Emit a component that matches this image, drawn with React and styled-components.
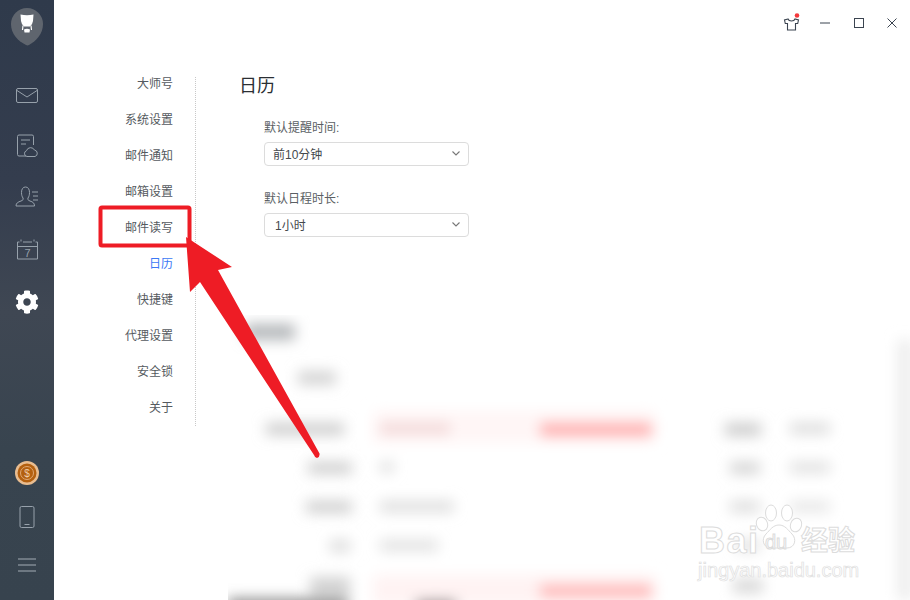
import React from "react";
import styled, { createGlobalStyle } from "styled-components";
import { FaCog } from "react-icons/fa";

const Global = createGlobalStyle`
  html, body { margin: 0; padding: 0; background: #fff; }
  body { font-family: "Liberation Sans", "Noto Sans CJK SC", sans-serif; }
`;

const Page = styled.div`
  position: relative;
  display: flex;
  width: 910px;
  height: 600px;
  overflow: hidden;
  background: #fff;
`;

const Rail = styled.aside`
  flex: 0 0 54px;
  display: flex;
  flex-direction: column;
  align-items: center;
  background: linear-gradient(180deg, #2f3a4b 0%, #343d4e 30%, #3f4753 52%, #38444f 75%, #37434e 100%);
`;

const Logo = styled.div`
  height: 70px;
  padding-top: 8px;
  box-sizing: border-box;
`;

const RailItem = styled.div`
  height: ${(p) => p.$h}px;
  display: flex;
  align-items: center;
  justify-content: center;
  color: ${(p) => p.$color || "#97a1ab"};
`;

const RailBottom = styled.div`
  margin-top: auto;
  padding-bottom: 9px;
`;

const Main = styled.main`
  flex: 1;
  display: flex;
  flex-direction: column;
`;

const TitleBar = styled.div`
  height: 46px;
  display: flex;
  justify-content: flex-end;
  padding-right: 1px;
  color: #3b4450;
`;

const WinButton = styled.div`
  width: 33.5px;
  display: flex;
  align-items: center;
  justify-content: center;
`;

const Body = styled.div`
  display: flex;
  align-items: flex-start;
  margin-top: 31px;
`;

const Nav = styled.nav`
  flex: 0 0 141px;
  height: 349px;
  border-right: 1px dotted #c8c8c8;
`;

const NavList = styled.div`
  margin-top: -11px;
`;

const NavItem = styled.div`
  height: 36px;
  line-height: 36px;
  padding-right: 22px;
  text-align: right;
  font-size: 12px;
  color: ${(p) => (p.$active ? "#3b78f5" : "#555a60")};
`;

const Content = styled.section`
  padding-left: 43px;
`;

const Title = styled.h1`
  margin: -4px 0 0;
  font-size: 18px;
  line-height: 26px;
  font-weight: 400;
  color: #2b2f33;
`;

const Field = styled.div`
  padding-left: 25px;
  margin-top: ${(p) => p.$top}px;
`;

const Label = styled.div`
  font-size: 12px;
  line-height: 18px;
  color: #5b5f64;
`;

const Select = styled.div`
  box-sizing: border-box;
  width: 205px;
  height: 24px;
  margin-top: 5px;
  padding: 0 8px 2px ${(p) => p.$inset}px;
  display: flex;
  align-items: center;
  justify-content: space-between;
  border: 1px solid #dcdcdc;
  border-radius: 4px;
  font-size: 12px;
  color: #44484d;
`;

const Smudges = styled.svg`
  position: absolute;
  left: 228px;
  top: 315px;
`;

const Annotation = styled.svg`
  position: absolute;
  left: 0;
  top: 0;
  pointer-events: none;
`;

const Watermark = styled.div`
  position: absolute;
  left: 698px;
  top: 504px;
  width: 164px;
  height: 80px;
  color: #fff;
  -webkit-text-stroke: 1px #dcdcdc;
`;

const WmBai = styled.span`
  position: absolute;
  left: 1px;
  top: 19px;
  font-size: 36px;
  line-height: 36px;
  font-weight: 700;
  letter-spacing: 1.500px;
`;

const WmDu = styled.span`
  position: absolute;
  left: 67px;
  top: 28px;
  font-size: 20px;
  line-height: 20px;
  font-weight: 400;
  z-index: 1;
`;

const WmCn = styled.span`
  position: absolute;
  left: 103px;
  top: 21px;
  font-size: 27px;
  line-height: 32px;
  font-weight: 700;
  white-space: nowrap;
`;

const WmUrl = styled.span`
  position: absolute;
  left: 0;
  top: 54px;
  font-size: 20px;
  line-height: 24px;
  white-space: nowrap;
  -webkit-text-stroke: 0.7px #e0e0e0;
`;

const WmPaw = styled.svg`
  position: absolute;
  left: 57px;
  top: 0;
`;

const Chevron = () => (
  <svg width="8" height="5" viewBox="0 0 8 5" fill="none" stroke="#777" strokeWidth="1.100">
    <path d="M.5.5L4 4 7.500.5" />
  </svg>
);

const navItems = ["大师号", "系统设置", "邮件通知", "邮箱设置", "邮件读写", "日历", "快捷键", "代理设置", "安全锁", "关于"];

const smudges = [
  [17, 9, 50, 16, "#b4b7ba"],
  [70, 56, 38, 14, "#d4d4d4"],
  [38, 108, 78, 12, "#cccccc"],
  [80, 147, 44, 12, "#cfcfcf"],
  [78, 186, 46, 12, "#cfcfcf"],
  [102, 225, 20, 12, "#dcdcdc"],
  [82, 262, 40, 20, "#d2d2d2"],
  [145, 96, 282, 32, "#fff6f6"],
  [152, 108, 70, 11, "#f2d6d6"],
  [312, 108, 112, 13, "#ffa8a8"],
  [152, 147, 14, 10, "#dddddd"],
  [152, 186, 74, 11, "#dddddd"],
  [152, 225, 58, 11, "#e0e0e0"],
  [145, 260, 282, 30, "#fff3f3"],
  [312, 270, 112, 12, "#ffb0b0"],
  [497, 108, 36, 13, "#cccccc"],
  [562, 108, 40, 11, "#dcdcdc"],
  [502, 147, 30, 12, "#d4d4d4"],
  [562, 147, 40, 11, "#e0e0e0"],
  [502, 186, 30, 11, "#dcdcdc"],
  [562, 186, 40, 11, "#e6e6e6"],
  [508, 225, 24, 11, "#e0e0e0"],
  [505, 264, 30, 14, "#d8d8d8"],
  [670, 25, 14, 260, "#ececec"],
  [0, 284, 120, 12, "#808080"],
  [188, 286, 40, 10, "#6f6468"],
];

export default function App() {
  return (
    <Page>
      <Global />
      <Rail>
        <Logo>
          <svg width="34" height="38" viewBox="0 0 34 38">
            <path d="M17 0a16 16 0 0 1 16 16c0 10-7 17-14 21-1 .5-2 .5-3 0C8 33 1 26 1 16A16 16 0 0 1 17 0z" fill="#5f656e" />
            <path d="M10.500 6.500Q17 8 23.500 6.500L23 13Q22.500 16.500 20 18.500L14 18.500Q11.500 16.500 11 13z" fill="#fff" />
            <path d="M14 21.500Q17 19.800 20 21.500L19.500 24.500H14.500z" fill="#fff" />
            <path d="M13 17.500L12.500 22M21 17.500L21.500 22" stroke="#fff" strokeWidth="1.200" fill="none" />
          </svg>
        </Logo>
        <RailItem $h={50}>
          <svg width="24" height="17" viewBox="0 0 24 17" fill="none" stroke="currentColor" strokeWidth="1">
            <rect x="1.500" y="1.500" width="21" height="14" rx="1.500" />
            <path d="M2 3.500l10 6.500 10-6.500" />
          </svg>
        </RailItem>
        <RailItem $h={52}>
          <svg width="22" height="24" viewBox="0 0 22 24" fill="none" stroke="currentColor" strokeWidth="1">
            <path d="M10 22H3a1.500 1.500 0 0 1-1.500-1.500v-18A1.500 1.500 0 0 1 3 1h13a1.500 1.500 0 0 1 1.500 1.500V11" />
            <path d="M5 6h9M5 10h5" />
            <path d="M11 22.500a3 3 0 0 1-.5-5.800 4.300 4.300 0 0 1 8-.6 3.300 3.300 0 0 1 .5 6.400z" />
          </svg>
        </RailItem>
        <RailItem $h={48}>
          <svg width="24" height="21" viewBox="0 0 24 21" fill="none" stroke="currentColor" strokeWidth="1">
            <path d="M1 20c0-3 2-4 5-5 2-.7 2.500-1.500 2-3-1-1.500-1.500-3-1.500-5.500C6.500 3 8 1 10.500 1s4 2 4 5.500c0 2.500-.5 4-1.500 5.500-.5 1.500 0 2.300 2 3 3 1 4.500 2 4.500 5z" />
            <path d="M17 6h6M18 10h5M18 14h5" />
          </svg>
        </RailItem>
        <RailItem $h={58}>
          <svg width="23" height="21" viewBox="0 0 23 21" fill="none" stroke="currentColor" strokeWidth="1">
            <path d="M1.500 3h2M7 3h9M19.500 3h2" />
            <path d="M1.500 3v17h20V3M1.500 7.500h20" />
            <path d="M5 .5v2M18 .5v2" />
            <text x="11.500" y="17.500" textAnchor="middle" fontSize="11" fontFamily="Liberation Sans, sans-serif" fill="currentColor" stroke="none">7</text>
          </svg>
        </RailItem>
        <RailItem $h={48} $color="#fff">
          <FaCog size={24} />
        </RailItem>
        <RailBottom>
          <RailItem $h={44}>
            <svg width="24" height="24" viewBox="0 0 24 24">
              <circle cx="12" cy="12" r="12" fill="#e9bd90" />
              <circle cx="12" cy="12" r="9.500" fill="#b4600f" />
              <circle cx="12" cy="12" r="6.500" fill="none" stroke="#e0a873" strokeWidth="1" />
              <text x="12" y="15.500" textAnchor="middle" fontSize="10" fontFamily="Liberation Sans, sans-serif" fill="#f0cda8">$</text>
            </svg>
          </RailItem>
          <RailItem $h={44}>
            <svg width="16" height="22" viewBox="0 0 16 22" fill="none" stroke="currentColor" strokeWidth="1">
              <rect x="1" y=".5" width="14" height="21" rx="1.500" />
              <path d="M5.500 18.500h5" />
            </svg>
          </RailItem>
          <RailItem $h={52}>
            <svg width="18" height="14" viewBox="0 0 18 14" fill="none" stroke="#a4adb5" strokeWidth="1">
              <path d="M0 1h18M0 7h18M0 13h18" />
            </svg>
          </RailItem>
        </RailBottom>
      </Rail>
      <Main>
        <TitleBar>
          <WinButton>
            <svg width="20" height="22" viewBox="0 0 20 22" fill="none" stroke="currentColor" strokeWidth="1.100">
              <path d="M6 7l-3.500 1 .8 3.500H5.500V18h8v-6.500h2.200L16.500 8 13 7c-.5 1.500-1.500 2-3.500 2S6.500 8.500 6 7z" />
              <circle cx="15" cy="3.500" r="2.300" fill="#f4393c" stroke="none" />
            </svg>
          </WinButton>
          <WinButton>
            <svg width="10" height="2" viewBox="0 0 10 2" stroke="currentColor"><path d="M0 1h10" /></svg>
          </WinButton>
          <WinButton>
            <svg width="10" height="10" viewBox="0 0 10 10" fill="none" stroke="currentColor"><rect x=".5" y=".5" width="9" height="9" /></svg>
          </WinButton>
          <WinButton>
            <svg width="10" height="10" viewBox="0 0 10 10" fill="none" stroke="currentColor"><path d="M.5.5l9 9M9.500.5l-9 9" /></svg>
          </WinButton>
        </TitleBar>
        <Body>
          <Nav>
            <NavList>
              {navItems.map((n) => (
                <NavItem key={n} $active={n === "日历"}>{n}</NavItem>
              ))}
            </NavList>
          </Nav>
          <Content>
            <Title>日历</Title>
            <Field $top={20}>
              <Label>默认提醒时间:</Label>
              <Select $inset={8}>前10分钟<Chevron /></Select>
            </Field>
            <Field $top={24}>
              <Label>默认日程时长:</Label>
              <Select $inset={10}>1小时<Chevron /></Select>
            </Field>
          </Content>
        </Body>
      </Main>

      <Smudges width="682" height="285" viewBox="0 0 682 285">
        <defs>
          <filter id="blur" x="-30%" y="-100%" width="160%" height="300%">
            <feGaussianBlur stdDeviation="7" />
          </filter>
        </defs>
        <g filter="url(#blur)">
          {smudges.map(([x, y, w, h, c], i) => (
            <rect key={i} x={x} y={y} width={w} height={h} fill={c} />
          ))}
        </g>
      </Smudges>

      <Watermark>
        <WmPaw width="56" height="60" viewBox="0 0 56 60" fill="#fff" stroke="#dcdcdc">
          <ellipse cx="16" cy="9" rx="5.500" ry="8" />
          <ellipse cx="32" cy="9" rx="5.500" ry="8" />
          <ellipse cx="7" cy="20" rx="5.500" ry="7" transform="rotate(-20 7 20)" />
          <ellipse cx="41" cy="21" rx="5.500" ry="7" transform="rotate(20 41 21)" />
          <path d="M24 21c6 0 9 5 13 9 5 5 3 14-5 14H16C8 44 6 35 11 30c4-4 7-9 13-9z" />
        </WmPaw>
        <WmBai>Bai</WmBai>
        <WmDu>du</WmDu>
        <WmCn>经验</WmCn>
        <WmUrl>jingyan.baidu.com</WmUrl>
      </Watermark>

      <Annotation width="910" height="600" viewBox="0 0 910 600">
        <rect x="100.500" y="207.500" width="89" height="38" rx="1.500" fill="none" stroke="#ee1c25" strokeWidth="4" />
        <path d="M186 237L232 267L218 270L319.500 453.500Q320 457 317 458Q315 458 314 455L200 282L190 292z" fill="#ee1c25" />
      </Annotation>
    </Page>
  );
}
